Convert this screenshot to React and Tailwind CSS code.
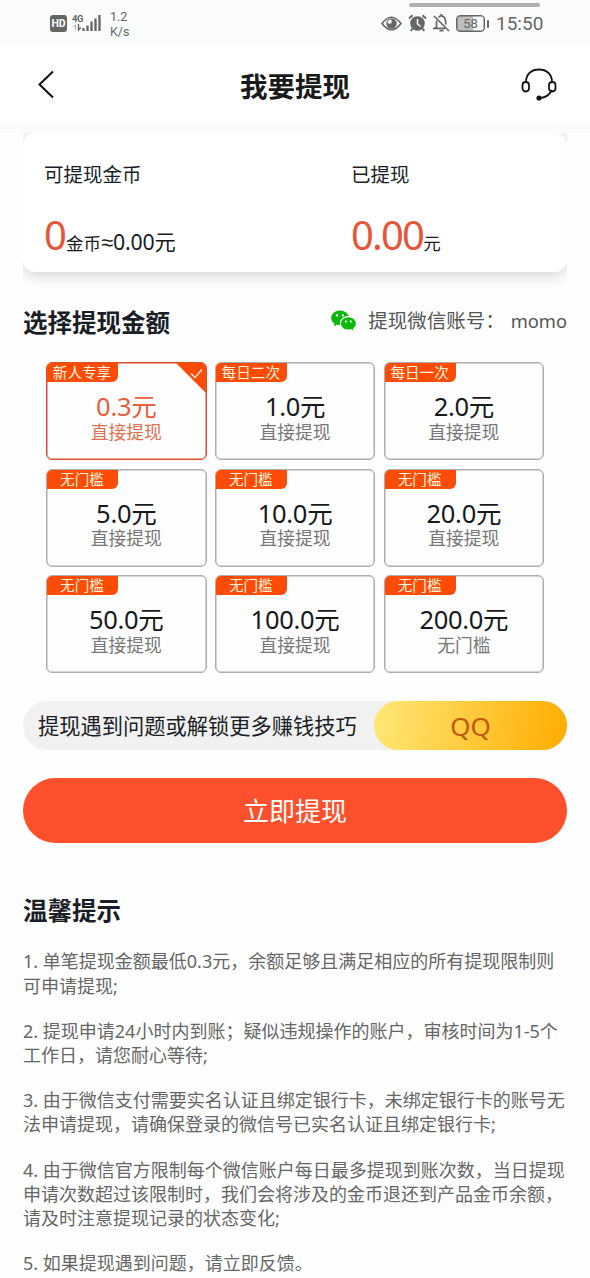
import React from "react";
import { RiWechatFill } from "react-icons/ri";

const AMOUNTS = [
  { tag: "新人专享", amount: "0.3", note: "直接提现", selected: true },
  { tag: "每日二次", amount: "1.0", note: "直接提现" },
  { tag: "每日一次", amount: "2.0", note: "直接提现" },
  { tag: "无门槛", amount: "5.0", note: "直接提现" },
  { tag: "无门槛", amount: "10.0", note: "直接提现" },
  { tag: "无门槛", amount: "20.0", note: "直接提现" },
  { tag: "无门槛", amount: "50.0", note: "直接提现" },
  { tag: "无门槛", amount: "100.0", note: "直接提现" },
  { tag: "无门槛", amount: "200.0", note: "无门槛" },
];

const TIPS = [
  ["1. 单笔提现金额最低0.3元，余额足够且满足相应的所有提现限制则", "可申请提现;"],
  ["2. 提现申请24小时内到账；疑似违规操作的账户，审核时间为1-5个", "工作日，请您耐心等待;"],
  ["3. 由于微信支付需要实名认证且绑定银行卡，未绑定银行卡的账号无", "法申请提现，请确保登录的微信号已实名认证且绑定银行卡;"],
  ["4. 由于微信官方限制每个微信账户每日最多提现到账次数，当日提现", "申请次数超过该限制时，我们会将涉及的金币退还到产品金币余额，", "请及时注意提现记录的状态变化;"],
  ["5. 如果提现遇到问题，请立即反馈。"],
];

function StatusBar() {
  return (
    <div className="relative flex h-[45px] items-start bg-[#fafdfc] font-[Roboto,sans-serif] text-[#666]">
      <div className="absolute left-[409px] top-[3px] h-[4px] w-[131px] rounded-full bg-[#b0b2b1]" />
      <div className="ml-[50px] mt-[15px] h-[17px] w-[17px] shrink-0 rounded-[3px] bg-[#666] text-center text-[10.5px] font-bold leading-[17px] text-white">HD</div>
      <div className="ml-[5px] mt-[13px] flex h-[19px] w-[29px] shrink-0">
        <div className="flex w-[10px] flex-col">
          <span className="text-[9.5px] font-bold leading-[11px] tracking-[-0.5px]">4G</span>
          <svg className="ml-px" width="9" height="7" viewBox="0 0 9 7" fill="none" stroke="#666">
            <path d="M2.500 6V1L.5 3" strokeWidth="1" opacity=".5" />
            <path d="M5.500 0V6L7.800 3.500" strokeWidth="1.400" />
          </svg>
        </div>
        <svg width="19" height="19" viewBox="0 0 19 19" fill="none" stroke="#666">
          <path d="M1.500 18v-3M5.500 18v-5.500M9.500 18V8.500M13.500 18V5.500M17.500 18V2" strokeWidth="2.300" />
        </svg>
      </div>
      <div className="ml-[9px] mt-[9px] w-[60px] text-[12.500px] leading-[15px]">1.2<br />K/s</div>
      <svg className="ml-[211px] mt-[16px] shrink-0" width="21" height="15" viewBox="0 0 21 15">
        <path d="M1 7.500Q10.500-5 20 7.500Q10.500 20 1 7.500Z" fill="none" stroke="#666" strokeWidth="1.600" />
        <circle cx="10.500" cy="7.500" r="5.200" fill="#666" />
        <path d="M10.500 7.500H6.500A4 4 0 0 1 10.500 3.500Z" fill="#fafdfc" />
      </svg>
      <svg className="ml-[6px] mt-[14px] shrink-0" width="19" height="18" viewBox="0 0 19 18">
        <circle cx="9.500" cy="9.500" r="7.300" fill="#666" />
        <path d="M1 4.500L4.500 1.200M18 4.500L14.500 1.200M4.500 14.500L2.800 17M14.500 14.500L16.200 17" stroke="#666" strokeWidth="1.900" />
        <path d="M9.500 5v5l3.200 2.500" fill="none" stroke="#fafdfc" strokeWidth="1.500" />
      </svg>
      <svg className="ml-[6px] mt-[14px] shrink-0" width="17" height="19" viewBox="0 0 17 19" fill="none" stroke="#666" strokeWidth="1.700">
        <path d="M1 2L16 17M5.500 3.500Q8 .5 11 3.200Q12.800 5 12.800 10.500M3.500 6.500V13L1.500 14.300H12M6.500 16.700H10.500M8.200 0V2.500" />
      </svg>
      <div className="ml-[6px] mt-[15px] flex shrink-0 items-center">
        <div className="flex h-[17px] w-[29px] rounded-[4px] border-[1.5px] border-[#666] bg-[linear-gradient(90deg,#bdbfbe_60%,#fafdfc_60%)] text-[13px] leading-[15px] shadow-[inset_0_0_0_0.5px_#666]">
          <span className="w-full text-center">58</span>
        </div>
        <div className="ml-[2px] h-[8px] w-[2px] rounded-full bg-[#666]" />
      </div>
      <div className="ml-[7px] mt-[11px] text-[19px] leading-[26px]">15:50</div>
    </div>
  );
}

function AmountCard({ tag, amount, note, selected }) {
  return (
    <div
      className={
        "relative flex h-[98px] flex-col items-center overflow-hidden rounded-[6px] border " +
        (selected
          ? "border-[#d9512c] text-[#e5603d] shadow-[inset_0_0_0_0.5px_#d9512c]"
          : "border-[#adadad] text-[#17191d] shadow-[inset_0_0_0_0.5px_#adadad]")
      }
    >
      <div className="absolute -left-px -top-px flex h-[20px] w-[72px] items-center justify-center rounded-br-[6px] bg-[#fd4b08] text-[14.600px] leading-[20px] text-[#fff5dc]">
        {tag}
      </div>
      {selected && (
        <svg className="absolute right-0 top-0" width="30" height="30" viewBox="0 0 30 30">
          <path d="M0 0H30V30Z" fill="#fd4b08" />
          <path d="M15 10.500L19 14.500L26 6.500" fill="none" stroke="#ffe9d8" strokeWidth="1.400" />
        </svg>
      )}
      <div className="mt-[28px] text-[25.500px] leading-[30px] tracking-[-0.3px]">{amount}元</div>
      <div className={"mt-[0.500px] text-[17.800px] leading-[20px] " + (selected ? "text-[#e2704f]" : "text-[#777]")}>{note}</div>
    </div>
  );
}

export default function App() {
  return (
    <div className="h-[1278px] w-[590px] overflow-hidden bg-[#fefefe] font-['Noto_Sans','Noto_Sans_CJK_SC',sans-serif] text-[#1b1e26]">
      <StatusBar />
      <header className="flex h-[78px] items-center justify-between bg-white pl-[37px] pr-[32px]">
        <svg width="38" height="30" viewBox="0 0 38 30" fill="none" stroke="#111" strokeWidth="2">
          <path d="M16 2.500L2.500 15.500L16 28.500" />
        </svg>
        <h1 className="-ml-[5px] mt-[5px] text-[27.500px] font-bold leading-[40px] text-[#1a1a1a]">我要提现</h1>
        <svg width="38" height="34" viewBox="0 0 38 34" fill="none" stroke="#151515" strokeWidth="1.800">
          <path d="M6 15C6 7 11.500 2.500 19 2.500S32 7 32 15M32 23Q28 31 19 31" />
          <rect x="2.500" y="15" width="6.500" height="9.500" rx="3.200" />
          <rect x="29" y="15" width="6.500" height="9.500" rx="3.200" />
          <circle cx="19" cy="31" r="1.700" fill="#151515" />
        </svg>
      </header>
      <div className="h-[10px] bg-[#fbfbfb]" />

      <main className="px-[23px]">
        <div className="h-[164px] overflow-hidden">
          <section className="grid h-[139px] grid-cols-[307px_1fr] rounded-[12px] bg-white pl-[21px] shadow-[0_2px_16px_rgba(0,0,0,0.2)]">
            <div>
              <div className="mt-[28px] text-[19.500px] leading-[28px]">可提现金币</div>
              <div className="mt-[21px] flex items-baseline text-[#17191d]">
                <span className="text-[40px] leading-[50px] -tracking-[1px] text-[#e5573a]">0</span>
                <span className="text-[17.500px]">金币</span>
                <span className="font-['Liberation_Sans',sans-serif] text-[22px]">≈</span>
                <span className="text-[21.300px] -tracking-[0.2px]">0.00元</span>
              </div>
            </div>
            <div>
              <div className="mt-[28px] text-[19.500px] leading-[28px]">已提现</div>
              <div className="mt-[21px] flex items-baseline">
                <span className="text-[40px] leading-[50px] tracking-[-1.800px] text-[#e5573a]">0.00</span>
                <span className="text-[17.500px]">元</span>
              </div>
            </div>
          </section>
        </div>

        <div className="mt-[6px] flex h-[40px] items-center justify-between">
          <h2 className="text-[24.500px] font-bold leading-[40px]">选择提现金额</h2>
          <div className="-mt-[5px] flex items-center text-[19.500px] text-[#555]">
            <RiWechatFill className="mr-[11px] h-[27px] w-[27px] text-[#0db80d]" />
            <span>提现微信账号：</span>
            <span className="ml-[6px] text-[18.300px]">momo</span>
          </div>
        </div>

        <div className="mx-[23px] mt-[19px] grid grid-cols-[160.500px_160.500px_160.500px] gap-x-[8.300px] gap-y-[8.500px]">
          {AMOUNTS.map((item) => (
            <AmountCard key={item.amount} {...item} />
          ))}
        </div>

        <div className="mt-[28px] flex h-[49px] items-center justify-between rounded-full bg-[#f1f1f1] pl-[15px]">
          <span className="mt-px text-[21.250px]">提现遇到问题或解锁更多赚钱技巧</span>
          <button className="h-[49px] w-[193px] rounded-full bg-[linear-gradient(100deg,#ffe878,#ffac00)] pt-px text-[26px] leading-[49px] text-[#bd5a0c]">QQ</button>
        </div>

        <button className="mt-[28px] flex h-[65px] w-full items-center justify-center rounded-full bg-[#ff502d] pt-[2px] text-[26px] text-white">立即提现</button>

        <h2 className="mt-[48px] text-[24.500px] font-bold leading-[40px]">温馨提示</h2>
        <div className="mt-[18.300px] flex flex-col gap-[21px] text-[18px] leading-[24.200px] text-[#666]">
          {TIPS.map((lines) => (
            <div key={lines[0]}>
              {lines.map((line) => (
                <p key={line} className="whitespace-nowrap">{line}</p>
              ))}
            </div>
          ))}
        </div>
      </main>
    </div>
  );
}
